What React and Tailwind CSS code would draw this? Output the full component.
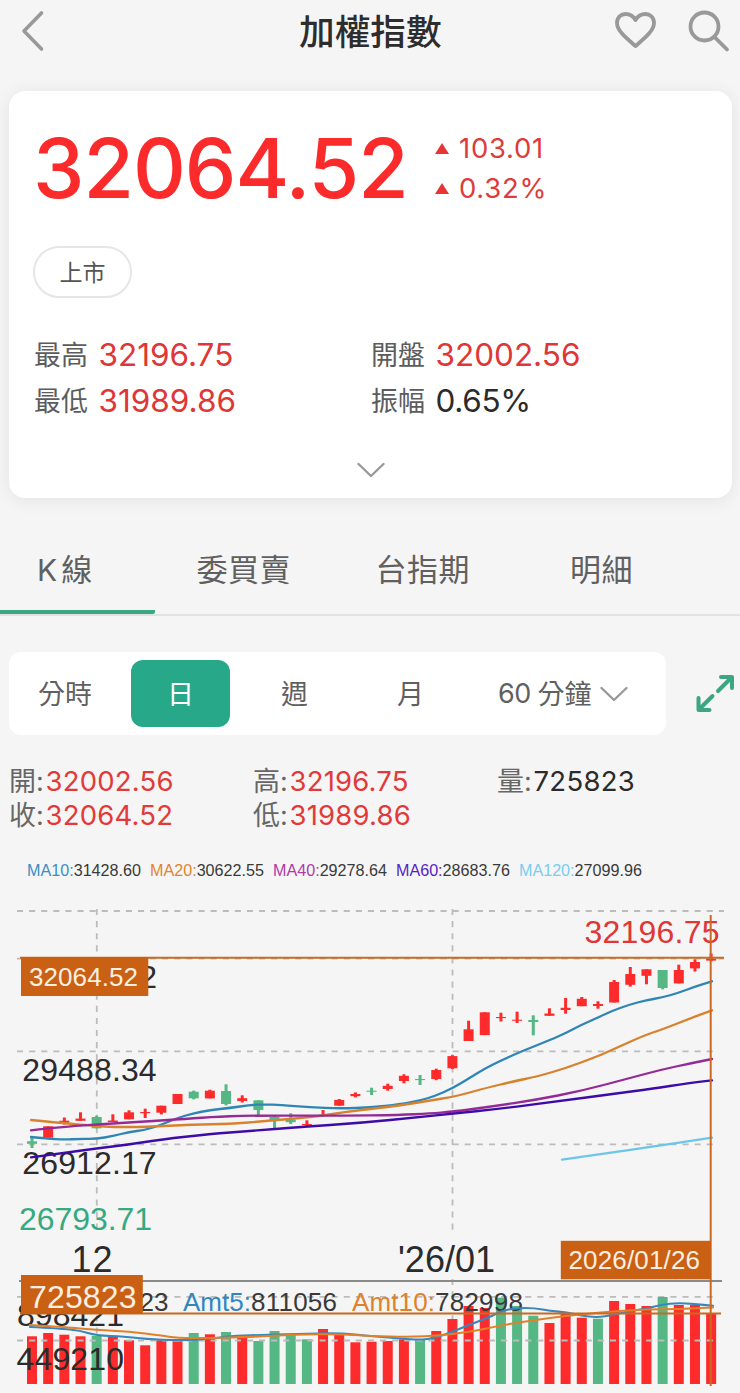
import React from "react";

const RED = "#fd2b2b";
const GREEN = "#55b784";
const FIRST_X = 32;
const STEP = 16.17;

// [colour, body top, body bottom, wick top, wick bottom, volume top, volume colour if different]
const DAYS = [
  ["g", 1141.3, 1143.8, 1136, 1148, 1336.3, "r"],
  ["r", 1126.3, 1137.7, 1126.3, 1137.7, 1333],
  ["r", 1120.7, 1122.6, 1117.5, 1124.5, 1334.7],
  ["r", 1118.6, 1120.8, 1112.3, 1120.8, 1336.3],
  ["g", 1117, 1128.3, 1115.7, 1128.3, 1336],
  ["r", 1120.5, 1122, 1114.3, 1122, 1336.3],
  ["r", 1112.3, 1119.3, 1110.3, 1119.3, 1340.3],
  ["r", 1112, 1113.2, 1108.7, 1118, 1345.3],
  ["r", 1105.7, 1112.7, 1105.7, 1114.4, 1340.3],
  ["r", 1094, 1104, 1094, 1104, 1341.3],
  ["g", 1091.7, 1098.3, 1090.6, 1099.4, 1333],
  ["r", 1090.7, 1098.4, 1089.7, 1098.4, 1334.3],
  ["g", 1091, 1104, 1084.3, 1105.4, 1332],
  ["r", 1098.2, 1101, 1095.3, 1102.5, 1338],
  ["g", 1100.3, 1110, 1100.3, 1115.7, 1341],
  ["g", 1117, 1120.5, 1116, 1128.5, 1331],
  ["g", 1119.7, 1122.2, 1113.3, 1124, 1334],
  ["r", 1124, 1125.2, 1120.3, 1127, 1339.3, "g"],
  ["r", 1115, 1116, 1110, 1116, 1329],
  ["r", 1099.9, 1105.7, 1099, 1105.7, 1333.3],
  ["r", 1094, 1096.2, 1092.4, 1097.4, 1342.3],
  ["g", 1090.7, 1091.8, 1087.7, 1095, 1341.7, "r"],
  ["r", 1085.8, 1089, 1083.7, 1090.7, 1341],
  ["r", 1075.8, 1081, 1074.3, 1083.3, 1339.3],
  ["g", 1079, 1080.1, 1075, 1085, 1339.3],
  ["r", 1070, 1079, 1068.7, 1080.2, 1331],
  ["r", 1056.1, 1068.3, 1055.2, 1069, 1319],
  ["r", 1029.3, 1041, 1020.7, 1041, 1306],
  ["r", 1012.3, 1035.1, 1012.3, 1035.1, 1308],
  ["r", 1017, 1018.1, 1012.7, 1021.5, 1297.7, "g"],
  ["r", 1019.7, 1020.8, 1011.7, 1023, 1306, "g"],
  ["g", 1020, 1022, 1015.3, 1035.3, 1315.7],
  ["r", 1013.5, 1015.8, 1008.3, 1015.8, 1323],
  ["r", 1007.8, 1010, 998, 1013.7, 1313.7],
  ["r", 998.8, 1006.2, 997, 1006.2, 1317.7],
  ["r", 1004, 1006, 1001.3, 1008.7, 1318.7, "g"],
  ["r", 982, 1002.5, 980, 1002.5, 1301],
  ["r", 974, 984.8, 967, 986.6, 1304],
  ["r", 969.3, 975.8, 969.3, 984.3, 1306],
  ["g", 970, 988, 970, 989.3, 1297],
  ["r", 970, 983.4, 964.7, 983.4, 1305],
  ["r", 962, 968.4, 959.3, 971.5, 1304.7],
  ["r", 958.7, 960.6, 953.5, 961.3, 1313.3],
];

const MA10 = [[31,1137],[47,1138.5],[64,1139.7],[80,1138.8],[96,1139],[113,1136],[129,1132],[145,1130],[161,1125],[177,1118],[193,1113.5],[210,1110],[230,1108],[250,1105],[265,1104.4],[280,1105],[310,1107.3],[340,1108.5],[370,1107.5],[400,1104.5],[420,1100.5],[435,1096],[452,1088.5],[468,1079],[484,1069],[500,1061],[520,1052],[550,1040],[566,1033],[581,1025],[597,1018],[613,1010.5],[630,1004.5],[645,1000.5],[662,997.5],[678,993],[694,987],[712,981.3]];
const MA20 = [[31,1120],[64,1123.3],[96,1126],[113,1127],[145,1127],[193,1124.5],[230,1124],[260,1121.5],[300,1118],[320,1116],[345,1112],[370,1109],[400,1105.5],[430,1100.5],[452,1097],[468,1093],[484,1088.5],[515,1081],[535,1077],[565,1068.5],[597,1056.5],[613,1049.5],[645,1035],[662,1029.5],[690,1018.5],[712,1010.3]];
const MA40 = [[31,1130.3],[64,1126.7],[96,1124.5],[129,1122.5],[177,1119.5],[210,1117],[250,1115.5],[340,1115.7],[400,1115],[430,1113.5],[452,1111.8],[490,1106.7],[535,1100],[581,1091],[630,1078],[662,1069.5],[690,1063.5],[712,1059]];
const MA60 = [[31,1157.3],[60,1153.5],[96,1148.5],[129,1144.5],[161,1139.5],[210,1134],[250,1131],[300,1127],[360,1123],[420,1117],[452,1113.8],[500,1108.7],[560,1101],[620,1093],[650,1089],[690,1083],[712,1080.3]];
const MA120 = [[562,1159.7],[600,1154.3],[650,1147],[712,1137.6]];
const AMT5 = [[30,1327],[60,1328.5],[80,1330.5],[96,1335.5],[125,1336.5],[145,1339],[180,1340.5],[210,1339],[230,1336],[258,1335],[295,1334],[340,1333],[370,1336],[400,1338.5],[420,1340],[435,1338],[452,1332],[470,1324.5],[490,1317],[500,1311.5],[515,1308],[535,1308],[550,1311],[567,1312.3],[581,1315.5],[597,1317.5],[613,1315],[630,1311],[645,1309],[662,1304.5],[678,1303],[694,1304],[713,1305.8]];
const AMT10 = [[30,1325],[64,1327],[96,1330],[129,1331.5],[161,1335.5],[177,1338],[210,1338],[250,1337],[295,1334.5],[340,1334],[370,1336],[410,1337],[440,1335.5],[460,1333],[480,1330],[500,1325.5],[535,1320],[565,1316],[600,1312.5],[640,1309.5],[680,1309],[713,1307.5]];

// Smooths a list of points with midpoint quadratic segments.
function curve(pts) {
  let d = `M${pts[0][0]} ${pts[0][1]}`;
  for (let i = 1; i < pts.length - 1; i++) {
    const [x, y] = pts[i];
    const [nx, ny] = pts[i + 1];
    d += ` Q${x} ${y} ${(x + nx) / 2} ${(y + ny) / 2}`;
  }
  const last = pts[pts.length - 1];
  return d + ` L${last[0]} ${last[1]}`;
}

function Curve({ pts, color, width = 2.3 }) {
  return <path d={curve(pts)} fill="none" stroke={color} strokeWidth={width} strokeLinecap="round" />;
}

function Label({ x, y, size, w, fill = "#2b2b2b", children }) {
  return (
    <text x={x} y={y} fontSize={size} textLength={w} fill={fill}>
      {children}
    </text>
  );
}

function Chart() {
  const dash = { stroke: "#bcbcbc", strokeWidth: 1.8, strokeDasharray: "6.1 6" };
  return (
    <svg
      className="block h-[500px] w-[740px] shrink-0 font-['Liberation_Sans',Arial,sans-serif]"
      viewBox="0 893 740 500"
    >
      <g {...dash}>
        <path d="M17 911H724" />
        <path d="M17 958.7H724" />
        <path d="M17 1051.3H714" />
        <path d="M17 1144.3H714" />
        <path d="M96.8 909V1231" />
        <path d="M452.5 909V1231" />
        <path d="M17 1296.8H714" />
        <path d="M96.8 1279V1384M452.5 1279V1384" />
      </g>
      <path d="M19 1281H722" stroke="#8a8a8a" strokeWidth="1.8" />

      <Label x={22} y={987.7} size={32} w={135}>32064.52</Label>

      {DAYS.map(([c, top, bottom, high, low], i) => {
        const x = FIRST_X + STEP * i;
        const fill = c === "r" ? RED : GREEN;
        return (
          <g key={i} fill={fill}>
            <rect x={x - 1.5} y={high} width="3" height={low - high} />
            <rect x={x - 5} y={top} width="10" height={bottom - top} />
          </g>
        );
      })}

      <Label x={22.3} y={1081} size={32} w={134.3}>29488.34</Label>
      <Label x={22.3} y={1174} size={32} w={134.3}>26912.17</Label>
      <Curve pts={MA10} color="#2f86b5" />
      <Curve pts={MA20} color="#d8822d" />
      <Curve pts={MA40} color="#952a96" />
      <Curve pts={MA60} color="#3d0ca8" />
      <Curve pts={MA120} color="#6cc6ea" />

      <Label x={19} y={1230} size={32} w={133} fill="#35a97f">26793.71</Label>
      <Label x={71.5} y={1271.5} size={36} w={41}>12</Label>
      <Label x={398} y={1271.5} size={36} w={97}>'26/01</Label>
      <Label x={584.5} y={942.5} size={32} w={135} fill="#e03636">32196.75</Label>

      {DAYS.map(([c, , , , , top, volColor], i) => (
        <rect
          key={i}
          x={FIRST_X + STEP * i - 5}
          y={top}
          width="10"
          height={1384 - top}
          fill={(volColor || c) === "r" ? RED : GREEN}
        />
      ))}
      <path d="M17 1340.5H714" {...dash} />

      <Label x={27.5} y={1311} size={26} w={141} fill="#3a3a3a">Amt:725823</Label>
      <Label x={183} y={1311} size={26} w={68} fill="#2f86c1">Amt5:</Label>
      <Label x={251} y={1311} size={26} w={86} fill="#3a3a3a">811056</Label>
      <Label x={352} y={1311} size={26} w={83} fill="#e0812a">Amt10:</Label>
      <Label x={435} y={1311} size={26} w={88} fill="#3a3a3a">782998</Label>
      <Label x={17} y={1325.8} size={32} w={107}>898421</Label>
      <Label x={16.5} y={1370} size={32} w={107.5}>449210</Label>
      <Curve pts={AMT5} color="#3886bd" width={2.1} />
      <Curve pts={AMT10} color="#e0812a" width={2.1} />

      <g stroke="#ca6a22" strokeWidth="2">
        <path d="M20 957.7H724" />
        <path d="M20 1313.5H721" />
        <path d="M710.7 915V1386" />
      </g>
      <g fill="#c96014">
        <rect x="21" y="957" width="127.3" height="39" />
        <rect x="21" y="1275" width="121.8" height="39" />
        <rect x="560.8" y="1240.8" width="150" height="38.5" />
      </g>
      <Label x={29} y={986} size={26} w={109} fill="#fbefe2">32064.52</Label>
      <Label x={29} y={1308.3} size={32} w={107.5} fill="#fbefe2">725823</Label>
      <Label x={568.5} y={1269} size={26} w={131.5} fill="#fbefe2">2026/01/26</Label>
    </svg>
  );
}

function Chevron() {
  return (
    <svg className="h-4 w-7 shrink-0" viewBox="0 0 28 16" fill="none" stroke="#999" strokeWidth="2.4" strokeLinecap="round" strokeLinejoin="round">
      <path d="M1.5 2L14 14L26.5 2" />
    </svg>
  );
}

function Change({ children }) {
  return (
    <div className="flex h-10 items-center">
      <svg className="mr-[10px] h-[11px] w-[14px]" viewBox="0 0 14 11"><path d="M7 0L14 11H0Z" fill="#e83434" /></svg>
      <span className="pt-[2px] text-[27.5px] tracking-[0.7px] text-[#e03b3b]">{children}</span>
    </div>
  );
}

function Stat({ label, children, dark }) {
  return (
    <div className="flex h-[46px] w-[337px] items-center">
      <span className="mt-px w-[64.5px] text-[27px] text-[#5c5c5c]">{label}</span>
      <span className={dark ? "text-[31.5px] tracking-[-0.3px] text-[#2b2b2b]" : "text-[31.5px] text-[#df3636]"}>{children}</span>
    </div>
  );
}

function Quote({ label, children, dark }) {
  return (
    <div className="flex h-[34px] items-center">
      <span className="-mt-px w-[36.5px] whitespace-nowrap text-[27px] text-[#666]">{label}:</span>
      <span className={dark ? "text-[27.5px] tracking-[0.3px] text-[#2b2b2b]" : "text-[27.5px] tracking-[0.2px] text-[#e23a3a]"}>{children}</span>
    </div>
  );
}

const AVERAGES = [
  ["MA10:", "31428.60", "text-[#3a8fc4]"],
  ["MA20:", "30622.55", "text-[#e0852f]"],
  ["MA40:", "29278.64", "text-[#b03aab]"],
  ["MA60:", "28683.76", "text-[#5524c4]"],
  ["MA120:", "27099.96", "text-[#7acdf0]"],
];

export default function App() {
  return (
    <div className="flex h-[1393px] w-[740px] flex-col overflow-hidden bg-[#f5f5f5] font-[Inter,'Noto_Sans_CJK_TC',sans-serif] leading-none">
      <header className="flex h-[91px] shrink-0 items-start">
        <svg className="mt-[9px] ml-[20px] h-11 w-[26px]" viewBox="0 0 26 44" fill="none" stroke="#999" strokeWidth="3.6" strokeLinecap="round" strokeLinejoin="round">
          <path d="M21.5 4L4 22L21.5 40" />
        </svg>
        <h1 className="mt-[14.500px] ml-[253px] w-[315px] text-[35.7px] font-medium text-[#2d2d2d]">加權指數</h1>
        <svg className="mt-[10px] h-[40px] w-[42px]" viewBox="0 0 42 40" fill="none" stroke="#999" strokeWidth="3.8" strokeLinejoin="round">
          <path d="M21.5 36C13 28.5 3 21 3 13C3 7.500 7 4 11.500 4C16 4 19.500 6.500 21.500 10C23.500 6.500 27 4 31.500 4C36 4 40 7.500 40 13C40 21 30 28.500 21.500 36Z" />
        </svg>
        <svg className="mt-[9px] ml-[31px] h-[46px] w-[44px]" viewBox="0 0 44 46" fill="none" stroke="#999" strokeWidth="3.8" strokeLinecap="round">
          <circle cx="17.500" cy="17.500" r="14" />
          <path d="M27.500 28L40 40.500" />
        </svg>
      </header>

      <section className="mx-[9px] flex h-[407px] w-[723px] shrink-0 flex-col rounded-[16px] bg-white pl-[25px] shadow-[0_2px_18px_rgba(0,0,0,0.08)]">
        <div className="flex h-[155px] items-start pt-[37px]">
          <span className="-ml-px w-[402px] text-[82px] font-[450] tracking-[-1px] text-[#fb2b2b]">32064.52</span>
          <div className="flex flex-col">
            <Change>103.01</Change>
            <Change>0.32%</Change>
          </div>
        </div>
        <div className="-ml-px flex h-[52px] w-[99px] items-center justify-center rounded-full border-2 border-[#e6e6e6] pt-[2px] text-[23px] text-[#555]">上市</div>
        <div className="mt-[34px] flex flex-wrap">
          <Stat label="最高">32196.75</Stat>
          <Stat label="開盤">32002.56</Stat>
          <Stat label="最低">31989.86</Stat>
          <Stat label="振幅" dark>0.65%</Stat>
        </div>
        <div className="mt-[38px] ml-[323px]"><Chevron /></div>
      </section>

      <nav className="mt-[18px] flex h-[100px] shrink-0 items-start border-b-2 border-[#e2e2e2] text-[31px] text-[#606060]">
        <div className="flex h-[98px] w-[155px] items-start rounded-br-[2px] border-b-[4.500px] border-[#3aa785] pt-[38px] pl-[37px]">
          <span className="mt-px text-[30px]">K</span>
          <span className="ml-[4px]">線</span>
        </div>
        <span className="mt-[38px] ml-[41.500px] w-[179px] tracking-[0.5px]">委買賣</span>
        <span className="mt-[38px] w-[194.500px] tracking-[0.5px]">台指期</span>
        <span className="mt-[38px] tracking-[0.5px]">明細</span>
      </nav>

      <div className="mt-[36px] ml-[9px] flex h-[83px] shrink-0 items-center">
        <div className="flex h-[83px] w-[657px] items-center rounded-[12px] bg-white text-[27px] text-[#606060]">
          <span className="mt-px w-[122px] pl-[29px]">分時</span>
          <span className="flex h-[67px] w-[99px] items-center justify-center rounded-[12px] bg-[#27a889] pt-px text-white">日</span>
          <span className="mt-px ml-[51px] w-[116px]">週</span>
          <span className="mt-px w-[101px]">月</span>
          <span className="w-[39.500px] tracking-[-0.6px]">60</span>
          <span className="mt-px mr-[8px]">分鐘</span>
          <Chevron />
        </div>
        <svg className="ml-[29px] h-[40px] w-[42px]" viewBox="0 0 42 40" fill="none" stroke="#3ca683" strokeWidth="4" strokeLinecap="round" strokeLinejoin="round">
          <path d="M26 3H37V14M36 4L23 17M3.500 24V36H14.500M4.500 35L17.500 22" />
        </svg>
      </div>

      <div className="mt-[30px] ml-[9px] grid shrink-0 grid-cols-[244px_244px_1fr]">
        <Quote label="開">32002.56</Quote>
        <Quote label="高">32196.75</Quote>
        <Quote label="量" dark>725823</Quote>
        <Quote label="收">32064.52</Quote>
        <Quote label="低">31989.86</Quote>
      </div>

      <div className="mt-[29px] ml-[27px] flex h-[31px] shrink-0 items-start gap-[9px] font-['Liberation_Sans',Arial,sans-serif] text-[16.15px]">
        {AVERAGES.map(([name, value, color]) => (
          <span key={name} className="whitespace-nowrap text-[#3a3a3a]">
            <span className={color}>{name}</span>
            {value}
          </span>
        ))}
      </div>

      <Chart />
    </div>
  );
}
